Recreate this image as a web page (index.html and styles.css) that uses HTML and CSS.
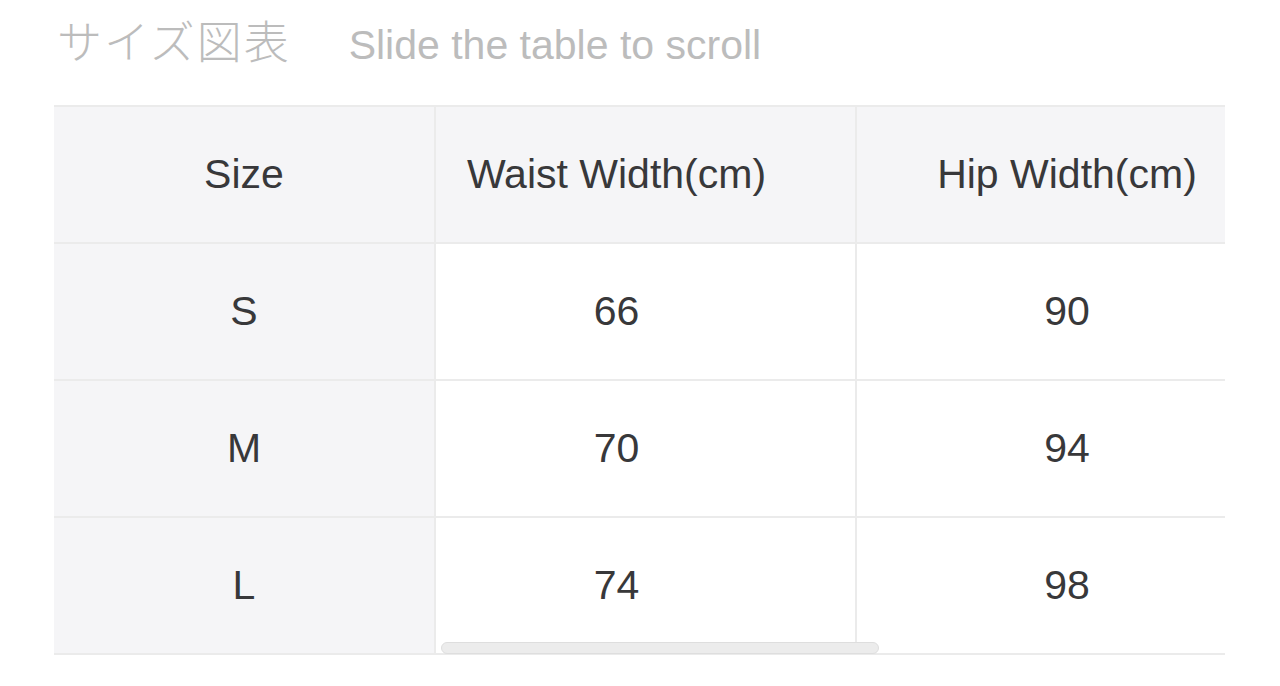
FILE: index.html
```html
<!DOCTYPE html>
<html lang="ja">
<head>
<meta charset="utf-8">
<title>サイズ図表</title>
<link rel="stylesheet" href="styles.css">
</head>
<body>
<div class="page">
  <div class="heading">
    <span class="heading-title">サイズ図表</span>
    <span class="heading-hint">Slide the table to scroll</span>
  </div>
  <div class="table-wrap">
    <table class="size-table">
      <thead>
        <tr>
          <th class="c-size">Size</th>
          <th class="c-waist">Waist Width(cm)</th>
          <th class="c-hip">Hip Width(cm)</th>
        </tr>
      </thead>
      <tbody>
        <tr><td class="c-size">S</td><td class="c-waist">66</td><td class="c-hip">90</td></tr>
        <tr><td class="c-size">M</td><td class="c-waist">70</td><td class="c-hip">94</td></tr>
        <tr><td class="c-size">L</td><td class="c-waist">74</td><td class="c-hip">98</td></tr>
      </tbody>
    </table>
    <div class="scroll-thumb"></div>
  </div>
</div>
</body>
</html>
```

FILE: styles.css
```css
html, body {
  margin: 0;
  padding: 0;
  background: #ffffff;
}

.page {
  width: 1280px;
  height: 686px;
  overflow: hidden;
  font-family: "Liberation Sans", Arial, "Noto Sans CJK JP", sans-serif;
}

.heading {
  display: flex;
  align-items: baseline;
  gap: 58px;
  padding: 10px 0 0 57px;
  height: 92px;
  box-sizing: border-box;
  color: #bcbcbc;
}

.heading-title {
  font-family: "Noto Sans CJK JP", sans-serif;
  font-size: 45px;
  letter-spacing: 2px;
  font-weight: 300;
  line-height: 60px;
}

.heading-hint {
  font-size: 41px;
  line-height: 60px;
}

.table-wrap {
  position: relative;
  margin-left: 54px;
  width: 1171px;
  overflow: hidden;
  margin-top: 13px;
}

.size-table {
  border-collapse: collapse;
  table-layout: fixed;
  width: 1223px;
  color: #38383a;
  font-size: 41px;
}

.size-table th,
.size-table td {
  height: 137px;
  padding: 0;
  text-align: center;
  vertical-align: middle;
  font-weight: 400;
  border: 2px solid #ebebeb;
  box-sizing: border-box;
}

.size-table thead th {
  background: #f5f5f7;
}

.size-table tbody td {
  background: #ffffff;
}

.size-table .c-size {
  width: 381px;
  background: #f5f5f7;
  border-left: none;
}

.size-table .c-waist {
  width: 421px;
  padding-right: 58px;
}

.size-table .c-hip {
  width: 421px;
  border-right: none;
}

.scroll-thumb {
  position: absolute;
  left: 387px;
  bottom: 1px;
  width: 436px;
  height: 10px;
  border-radius: 6px;
  background: #ececec;
  border: 1px solid #dedede;
}
```
